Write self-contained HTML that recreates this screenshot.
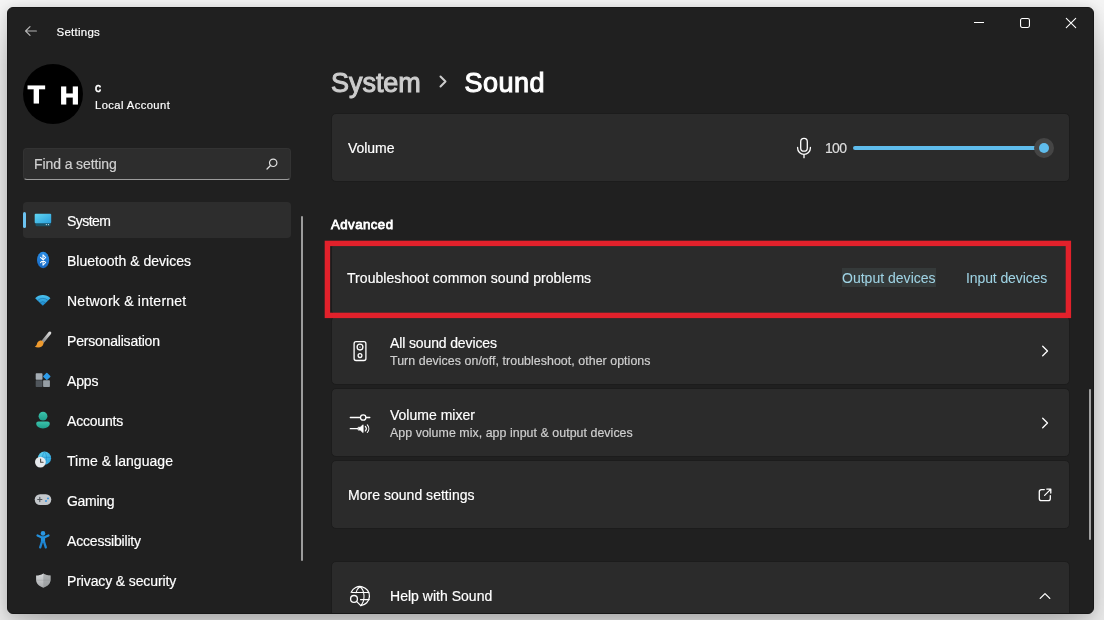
<!DOCTYPE html>
<html lang="en">
<head>
<meta charset="utf-8">
<title>Settings</title>
<style>
*{box-sizing:border-box;margin:0;padding:0}
html,body{width:1104px;height:620px;overflow:hidden}
body{background:#f6f6f6;font-family:"Liberation Sans",sans-serif;color:#fff;position:relative}
.win{position:absolute;left:7px;top:7px;width:1087px;height:607px;background:#202020;border:1px solid #171717;border-radius:6px;box-shadow:0 24px 48px rgba(0,0,0,.26),0 1px 12px rgba(0,0,0,.12);overflow:hidden}
.abs{position:absolute}
.t{position:absolute;white-space:nowrap;line-height:1;transform-origin:0 50%}
/* coordinates inside .win are page coords minus 8 (border 1 + left 7) */
.inner{will-change:transform;position:absolute;left:-8px;top:-8px;width:1104px;height:620px}
.card{position:absolute;left:331px;width:739px;background:#2b2b2b;border:1px solid #1c1c1c;border-radius:5px}
.nav{position:absolute;left:67px;font-size:14px;color:#fff;white-space:nowrap;line-height:16px;transform-origin:0 50%}
.nav,.t{-webkit-text-stroke:.18px}
.sub{color:#cfcfcf}
.link{color:#9fd3e4;-webkit-text-stroke:.05px}
svg{position:absolute;overflow:visible}
</style>
</head>
<body>
<div class="win"><div class="inner">

<!-- title bar -->
<svg style="left:25px;top:26px" width="12" height="10" viewBox="0 0 12 10" fill="none" stroke="#b4b4b4" stroke-width="1.2" stroke-linecap="round" stroke-linejoin="round"><path d="M5 .6.600 5l4.400 4.400M.8 5H11.4"/></svg>
<div class="t" id="t-settings" style="left:56.600px;top:27px;font-size:11.500px;letter-spacing:0.230px">Settings</div>

<svg style="left:974px;top:22px" width="10" height="1" viewBox="0 0 10 1"><rect width="10" height="1" fill="#fff"/></svg>
<svg style="left:1020px;top:18px" width="10" height="10" viewBox="0 0 10 10" fill="none" stroke="#fff" stroke-width="1.1"><rect x=".55" y=".55" width="8.9" height="8.9" rx="1.6"/></svg>
<svg style="left:1066px;top:18px" width="10" height="10" viewBox="0 0 10 10" fill="none" stroke="#fff" stroke-width="1.1" stroke-linecap="round"><path d="M.3.3l9.4 9.4M9.700.3.300 9.700"/></svg>

<!-- account -->
<div class="abs" style="left:23px;top:64px;width:60px;height:60px;border-radius:50%;background:#000"></div>
<div class="t" id="t-T" style="left:27.90px;top:83.00px;font-size:24.00px;font-weight:bold;-webkit-text-stroke:1.20px #fff;transform:scaleX(1.140)">T</div>
<div class="t" id="t-H" style="left:60.00px;top:84.20px;font-size:24.00px;font-weight:bold;-webkit-text-stroke:1.20px #fff;transform:scaleX(1.100)">H</div>
<div class="t" id="t-c" style="left:95px;top:81.500px;font-size:12px;-webkit-text-stroke:.6px #fff">c</div>
<div class="t" id="t-local" style="left:95px;top:100px;font-size:11.200px;letter-spacing:0.425px">Local Account</div>

<!-- search -->
<div class="abs" style="left:23px;top:148px;width:268px;height:32px;background:#2d2d2d;border-radius:4px;border:1px solid #333;border-bottom:1px solid #9c9c9c"></div>
<div class="t" id="t-find" style="left:34px;top:157px;font-size:14px;color:#d0d0d0;letter-spacing:-0.097px">Find a setting</div>
<svg style="left:266px;top:158px" width="12" height="12" viewBox="0 0 12 12" fill="none" stroke="#e0e0e0" stroke-width="1.2" stroke-linecap="round"><circle cx="7.2" cy="4.800" r="3.700"/><path d="M4.500 7.500 1 11"/></svg>

<!-- nav -->
<div class="abs" style="left:23px;top:202px;width:268px;height:36px;background:#2d2d2d;border-radius:4px"></div>
<div class="abs" style="left:23px;top:212px;width:3px;height:16px;background:#6cc3f1;border-radius:2px"></div>

<div class="nav" id="n0" style="top:213px;letter-spacing:-0.548px">System</div>
<div class="nav" id="n1" style="top:253px;letter-spacing:0.018px">Bluetooth &amp; devices</div>
<div class="nav" id="n2" style="top:293px;letter-spacing:0.240px">Network &amp; internet</div>
<div class="nav" id="n3" style="top:333px;letter-spacing:-0.196px">Personalisation</div>
<div class="nav" id="n4" style="top:373px;letter-spacing:-0.155px">Apps</div>
<div class="nav" id="n5" style="top:413px;letter-spacing:-0.199px">Accounts</div>
<div class="nav" id="n6" style="top:453px;letter-spacing:0.045px">Time &amp; language</div>
<div class="nav" id="n7" style="top:493px;letter-spacing:-0.289px">Gaming</div>
<div class="nav" id="n8" style="top:533px;letter-spacing:-0.181px">Accessibility</div>
<div class="nav" id="n9" style="top:573px;letter-spacing:-0.119px">Privacy &amp; security</div>


<!-- sidebar icons -->
<svg style="left:0;top:0" width="1104" height="620" viewBox="0 0 1104 620">
<defs>
<linearGradient id="gSys" x1="0" y1="0" x2="1" y2="1"><stop offset="0" stop-color="#62d6f2"/><stop offset="1" stop-color="#2a9fdc"/></linearGradient>
<linearGradient id="gBt" x1="0" y1="0" x2="0" y2="1"><stop offset="0" stop-color="#2a8ee6"/><stop offset="1" stop-color="#1668c4"/></linearGradient>
<linearGradient id="gWifi" x1="0" y1="0" x2="0" y2="1"><stop offset="0" stop-color="#4cc4f0"/><stop offset="1" stop-color="#1a86cc"/></linearGradient>
<linearGradient id="gBrush" x1="1" y1="0" x2="0" y2="1"><stop offset="0" stop-color="#d8d8d8"/><stop offset="1" stop-color="#8a8a8a"/></linearGradient>
<linearGradient id="gAcc" x1="0" y1="0" x2="0" y2="1"><stop offset="0" stop-color="#3cc4ac"/><stop offset="1" stop-color="#1f9e8c"/></linearGradient>
<linearGradient id="gShield" x1="0" y1="0" x2="0" y2="1"><stop offset="0" stop-color="#d8dadc"/><stop offset="1" stop-color="#a8aaac"/></linearGradient>
</defs>
<!-- system -->
<rect x="35.5" y="216" width="15" height="10.300" rx="1.500" fill="#1b5468"/>
<rect x="34.700" y="213.700" width="16.500" height="9.500" rx="1" fill="url(#gSys)"/>
<circle cx="46.300" cy="224.600" r=".55" fill="#e8f6ff"/><circle cx="48.400" cy="224.600" r=".55" fill="#e8f6ff"/>
<!-- bluetooth -->
<ellipse cx="43.100" cy="260" rx="6.100" ry="8.300" fill="url(#gBt)"/>
<path d="M40.500 257.300l5.200 5.200-2.700 2.700v-10.400l2.700 2.700-5.200 5.200" fill="none" stroke="#fff" stroke-width="1.050" stroke-linejoin="round" stroke-linecap="round"/>
<!-- network -->
<path d="M42.800 305.800 35.160 298.160a10.800 10.800 0 0 1 15.280 0z" fill="url(#gWifi)"/>
<path d="M37.700 300.500a7.200 7.200 0 0 1 10.200 0M40.100 302.900a3.800 3.800 0 0 1 5.400 0" fill="none" stroke="#14669e" stroke-width=".9" opacity=".6"/>
<!-- personalisation brush -->
<path d="M49.800 333l-7.300 9" stroke="url(#gBrush)" stroke-width="3" stroke-linecap="round" fill="none"/>
<path d="M40.200 340.600c1.700-.6 3.500.9 3.300 2.800-.3 2.500-2.700 4.100-5.300 4.100-1.300 0-2.500-.2-3.500-.7 1.300-.6 1.900-1.400 2.200-2.700.4-1.700 1.600-3 3.300-3.500z" fill="#ee9a2e"/>
<!-- apps -->
<rect x="35.700" y="373.200" width="6.800" height="6.600" rx=".7" fill="#a4acb3"/>
<rect x="35.700" y="380.300" width="6.800" height="6.600" rx=".7" fill="#50565c"/>
<rect x="43.100" y="380.300" width="6.800" height="6.600" rx=".7" fill="#969ea5"/>
<rect x="44" y="373.600" width="5.600" height="5.600" rx=".7" transform="rotate(45 46.800 376.400)" fill="#2d9be8"/>
<!-- accounts -->
<circle cx="43" cy="416.200" r="4.400" fill="url(#gAcc)"/>
<path d="M38.400 421.400h9.200a2.200 2.200 0 0 1 2.200 2.200c0 3-2.800 4.800-6.800 4.800s-6.800-1.800-6.800-4.800a2.200 2.200 0 0 1 2.200-2.200z" fill="url(#gAcc)"/>
<!-- time & language -->
<circle cx="44.500" cy="458.200" r="6.600" fill="url(#gSys)"/>
<path d="M38.300 457.300h12.500M44.500 451.800c-2.800 3.400-2.800 9.200 0 12.800M44.500 451.800c2.800 3.400 2.800 9.200 0 12.800" fill="none" stroke="#1c86c4" stroke-width=".7" opacity=".75"/>
<circle cx="40.400" cy="462.100" r="5.400" fill="#e6e9ec"/>
<path d="M40.600 459v3.300h2.500" fill="none" stroke="#4a4340" stroke-width="1.100" stroke-linecap="round" stroke-linejoin="round"/>
<!-- gaming -->
<rect x="34.700" y="494.200" width="16.600" height="10.800" rx="5.400" fill="#c3c7cb"/>
<path d="M39.800 497.400v4.200M37.700 499.500h4.200" stroke="#4d5358" stroke-width="1.100" stroke-linecap="round"/>
<circle cx="46" cy="501" r=".95" fill="#2d8fe0"/><circle cx="48" cy="498.400" r=".95" fill="#2d8fe0"/>
<!-- accessibility -->
<circle cx="43" cy="533.400" r="2.300" fill="#2a97e2"/>
<path d="M37.500 535.400l3.900 1.900h3.200l3.900-1.900" fill="none" stroke="#2391dd" stroke-width="2.200" stroke-linecap="round" stroke-linejoin="round"/>
<path d="M40.900 536.800h4.200v5.800h-4.200z" fill="#2391dd"/>
<path d="M41.900 542l-1.700 5.400M44.100 542l1.700 5.400" fill="none" stroke="#1f86d2" stroke-width="2.300" stroke-linecap="round"/>
<!-- privacy shield -->
<path d="M43.300 573.400c2.200 1.400 4.600 2 7.200 2.100v4.300c0 3.600-2.700 6.400-7.200 7.900-4.500-1.500-7.200-4.300-7.200-7.900v-4.300c2.600-.1 5-.7 7.200-2.100z" fill="url(#gShield)"/>
<path d="M43.300 573.400c2.200 1.400 4.600 2 7.200 2.100v4.300c0 3.600-2.700 6.400-7.200 7.900z" fill="#8e9194" opacity=".55"/>
<path d="M36.100 580.200h14.400" stroke="#7d8083" stroke-width=".5" opacity=".5"/>
</svg>

<!-- sidebar scrollbar -->
<div class="abs" style="left:300.800px;top:216px;width:2.400px;height:344.600px;background:#9c9c9c;border-radius:1.2px"></div>

<!-- header -->
<div class="t" id="h-system" style="left:331px;top:70px;font-size:27px;color:#cdcdcd;-webkit-text-stroke:1px #cdcdcd;letter-spacing:-0.039px">System</div>
<svg style="left:438.800px;top:75.400px" width="8" height="13" viewBox="0 0 8 13" fill="none" stroke="#cdcdcd" stroke-width="2" stroke-linecap="round" stroke-linejoin="round"><path d="M1.500 1.500 6.500 6.500l-5 5"/></svg>
<div class="t" id="h-sound" style="left:464.600px;top:70px;font-size:27px;-webkit-text-stroke:1.05px #fff;letter-spacing:0.464px">Sound</div>

<!-- volume card -->
<div class="card" style="top:113px;height:69px"></div>
<div class="t" id="c-volume" style="left:348px;top:141px;font-size:14px;letter-spacing:-0.051px">Volume</div>
<div class="t" id="c-100" style="left:825px;top:141px;font-size:14px;color:#ddd;letter-spacing:-0.686px">100</div>
<div class="abs" style="left:853px;top:146px;width:186px;height:4px;border-radius:2px;background:#5fbcec"></div>
<div class="abs" style="left:1034px;top:138px;width:20px;height:20px;border-radius:50%;background:#454545"></div>
<div class="abs" style="left:1038.700px;top:142.700px;width:10.600px;height:10.600px;border-radius:50%;background:#5fbcec"></div>

<!-- advanced -->
<div class="t" id="c-adv" style="left:331px;top:218px;font-size:13.200px;-webkit-text-stroke:.8px #fff;letter-spacing:0.480px">Advanced</div>

<!-- troubleshoot card + red box -->
<div class="card" style="top:243px;height:72px"></div>
<svg style="left:0;top:0;z-index:2" width="1104" height="620" viewBox="0 0 1104 620"><rect x="327.400" y="243.400" width="741" height="72" fill="none" stroke="#e2212b" stroke-width="5.400"/></svg>
<div class="t" id="c-trouble" style="left:347px;top:271px;font-size:14px;letter-spacing:0.056px">Troubleshoot common sound problems</div>
<div class="abs" style="left:842px;top:268px;width:94px;height:18.500px;background:#353a3a"></div>
<div class="t link" id="c-out" style="left:842px;top:271px;font-size:14px;letter-spacing:0.015px">Output devices</div>
<div class="t link" id="c-in" style="left:966px;top:271px;font-size:14px;letter-spacing:-0.100px">Input devices</div>

<!-- all sound devices -->
<div class="card" style="top:316px;height:69px"></div>
<div class="t" id="c-all" style="left:390px;top:336px;font-size:14px;letter-spacing:-0.127px">All sound devices</div>
<div class="t sub" id="c-all2" style="left:390px;top:355px;font-size:12.4px;letter-spacing:0.046px">Turn devices on/off, troubleshoot, other options</div>

<!-- volume mixer -->
<div class="card" style="top:388px;height:69px"></div>
<div class="t" id="c-mix" style="left:390px;top:408px;font-size:14px;letter-spacing:0.007px">Volume mixer</div>
<div class="t sub" id="c-mix2" style="left:390px;top:427px;font-size:12.4px;letter-spacing:0.041px">App volume mix, app input &amp; output devices</div>

<!-- more sound settings -->
<div class="card" style="top:460px;height:69px"></div>
<div class="t" id="c-more" style="left:348px;top:488px;font-size:14px;letter-spacing:0.027px">More sound settings</div>

<!-- help -->
<div class="card" style="top:561px;height:60px;border-radius:5px 5px 0 0"></div>
<div class="t" id="c-help" style="left:390px;top:589px;font-size:14px;letter-spacing:0.023px">Help with Sound</div>


<!-- main icons -->
<svg style="left:0;top:0" width="1104" height="620" viewBox="0 0 1104 620" fill="none" stroke="#fff" stroke-width="1.300" stroke-linecap="round" stroke-linejoin="round">
<!-- mic -->
<rect x="800.700" y="138.400" width="6.600" height="12.800" rx="3.300"/>
<path d="M797.600 147.400v.6a6.400 6.400 0 0 0 12.800 0v-.6M804 154.500v3.200"/>
<!-- speaker device -->
<rect x="354.100" y="341.700" width="11.800" height="18.800" rx="2"/>
<circle cx="360" cy="347.100" r="2.900"/><circle cx="360" cy="347.100" r=".7" fill="#fff" stroke="none"/>
<circle cx="360" cy="355.600" r="1.900"/>
<!-- volume mixer -->
<path d="M350.3 417.5h9.7M366.3 417.5h3.5"/><circle cx="363.2" cy="417.5" r="2.7"/>
<path d="M350.3 428.7h7.5"/>
<path d="M358.5 427.3h1.7l2.900-2.500v7.800l-2.900-2.500h-1.700z" fill="#fff" stroke-width=".8"/>
<path d="M365.300 426.400a3.300 3.300 0 0 1 0 4.600M367.300 424.900a5.600 5.600 0 0 1 0 7.600" stroke-width="1.100"/>
<!-- chevrons -->
<path d="M1042.700 346.200l4.800 4.800-4.800 4.800"/>
<path d="M1042.700 418.200l4.800 4.800-4.800 4.800"/>
<path d="M1040.200 598.400l4.800-4.800 4.800 4.800"/>
<!-- external link -->
<path d="M1044.300 489.600h-2.800a2.200 2.200 0 0 0-2.200 2.200v6.600a2.200 2.200 0 0 0 2.200 2.200h6.600a2.200 2.200 0 0 0 2.200-2.200v-2.800M1046.800 489.100h4v4M1050.600 489.400l-6 6"/>
<!-- help globe -->
<path d="M351.200 592.300a9.500 9.500 0 1 1 9.600 13.200"/>
<path d="M352 592.500h16.800M360.500 599.600h8.700M360 586.500c-2.300 1.800-3.600 4-4 6.300M360 586.500c5 4.200 5.300 13.400 1.200 18.600" stroke-width="1.100"/>
<circle cx="354" cy="598.900" r="3.400"/><path d="M356.500 601.400l4.300 4.200"/>
</svg>

<!-- main scrollbar -->
<div class="abs" style="left:1088.900px;top:388.800px;width:2.300px;height:151.500px;background:#a0a0a0;border-radius:1.2px"></div>

</div></div>
</body>
</html>
